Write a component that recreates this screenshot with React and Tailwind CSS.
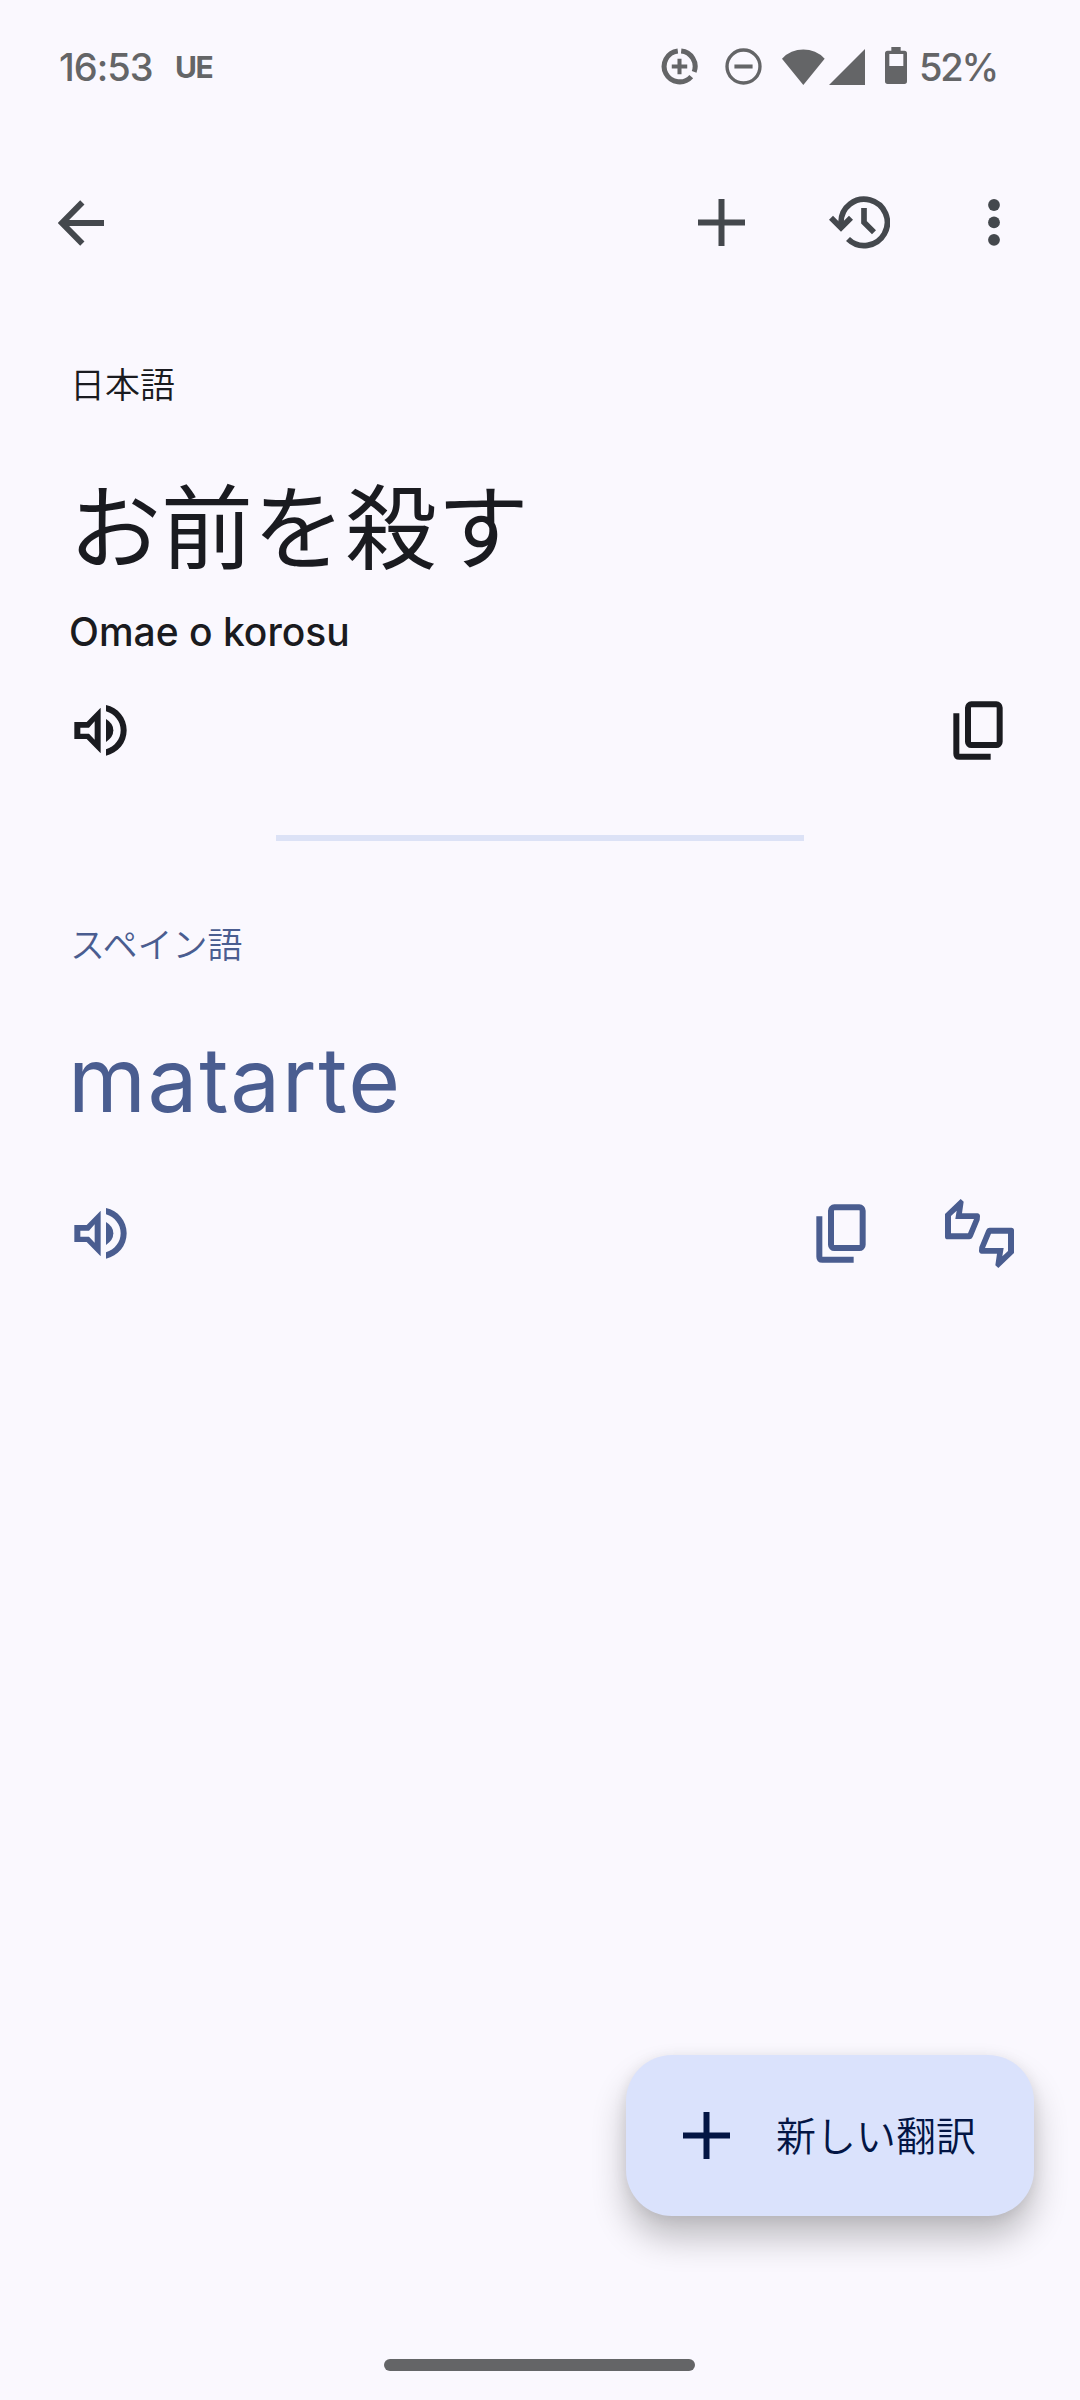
import React from 'react';

const VolumeIcon = () => (
  <svg width="53" height="51" viewBox="0 0 159 153" fill="currentColor">
    <path fillRule="evenodd" d="M1 51H38L80 8V145L38 102H1ZM19 68H45L62 49V104L45 86H19Z" />
    <path d="M96 42Q118 55 118 76T96 111Z" />
    <path d="M96 0C132 8 158 38 158 76S132 144 96 152V133C122 125 140 103 140 76S122 27 96 19Z" />
  </svg>
);

const CopyIcon = () => (
  <svg width="50" height="59" viewBox="0 0 150 177" fill="none" stroke="currentColor" strokeWidth="18">
    <rect x="45" y="10" width="95" height="122" rx="10" />
    <path d="M10 37V158Q10 167 19 167H113" />
  </svg>
);

const ThumbsIcon = () => {
  const thumb = "M0 45L47 0L56 8L51 43H97Q105 44 105 52L104 63L83 114Q80 121 73 121H8Q0 121 0 113ZM18 51L35 35L31 60H87L69 103H18Z";
  return (
    <svg width="69" height="69" viewBox="0 0 207 207" fill="currentColor" fillRule="evenodd">
      <path d={thumb} />
      <path d={thumb} transform="rotate(180 103.5 103.5)" />
    </svg>
  );
};

const PlusIcon = () => (
  <svg width="47" height="47" viewBox="0 0 47 47" stroke="currentColor" strokeWidth="6">
    <path d="M0 23.5H47M23.5 0V47" />
  </svg>
);

const BackIcon = () => (
  <svg width="46" height="46" viewBox="0 0 138 138" fill="none" stroke="currentColor" strokeWidth="18">
    <path d="M138 69H14M73 7L12 69L73 131" />
  </svg>
);

const HistoryIcon = () => (
  <svg width="61" height="53" viewBox="0 0 183 159" fill="none" stroke="currentColor" strokeWidth="17">
    <path d="M36 90V79A69.5 69.5 0 1 1 57 129" />
    <path d="M6 65L36 95L66 65" />
    <path d="M105 36V79L135 109" />
  </svg>
);

const MoreIcon = () => (
  <svg width="12" height="47" viewBox="0 0 12 47" fill="currentColor">
    <circle cx="6" cy="6" r="5.9" />
    <circle cx="6" cy="23.4" r="5.9" />
    <circle cx="6" cy="40.8" r="5.9" />
  </svg>
);

function StatusBar() {
  return (
    <div className="flex h-[133px] items-center pl-[59px] text-[#646567]">
      <span className="w-[116px] text-[38px] leading-none font-medium tracking-[-1px]">16:53</span>
      <span className="w-[486px] text-[30px] leading-none font-bold tracking-[-1.5px]">UE</span>
      {/* data saver */}
      <svg className="mr-[27px]" width="37" height="37" viewBox="0 0 110 110" fill="none" stroke="currentColor">
        <path strokeWidth="15" d="M50 9A46 46 0 1 0 90 85M60 9A46 46 0 0 1 98.5 71" />
        <path strokeWidth="12" d="M32 55H78M55 32V78" />
      </svg>
      {/* do not disturb */}
      <svg className="mr-[20px]" width="37" height="37" viewBox="0 0 110 110" fill="none" stroke="currentColor">
        <circle cx="55" cy="55" r="49" strokeWidth="10" />
        <path strokeWidth="12" d="M28 55H82" />
      </svg>
      <svg className="mr-[4px]" width="43" height="36" viewBox="0 0 129 108" fill="currentColor">
        <path d="M64 108L0 29A88 88 0 0 1 128 29Z" />
      </svg>
      <svg className="mr-[20px]" width="36" height="36" viewBox="0 0 36 36" fill="currentColor">
        <path d="M0 36L36 0V36Z" />
      </svg>
      <svg className="mb-[3px] mr-[12px]" width="22" height="37" viewBox="0 0 66 111" fill="currentColor">
        <path fillRule="evenodd" d="M19 0H47V11H58Q66 11 66 19V103Q66 111 58 111H8Q0 111 0 103V19Q0 11 8 11H19ZM13 21V57H55V21Z" />
      </svg>
      <span className="text-[38px] leading-none font-medium tracking-[-2.2px]">52%</span>
    </div>
  );
}

function TopBar() {
  return (
    <div className="flex h-[179px] items-center pr-[80px] pl-[58px] text-[#44484d]">
      <BackIcon />
      <div className="ml-auto flex items-center">
        <PlusIcon />
        <div className="mr-[98px] ml-[84px]"><HistoryIcon /></div>
        <MoreIcon />
      </div>
    </div>
  );
}

export default function App() {
  return (
    <div className="flex h-[2400px] w-[1080px] flex-col bg-[#faf8fe] font-['Inter','Noto_Sans_CJK_JP',sans-serif]">
      <StatusBar />
      <TopBar />

      <section className="px-[70px] pt-[45px] text-[#1a1b20]">
        <p className="h-[52px] font-['Noto_Sans_CJK_JP',sans-serif] text-[35px] leading-[52px] font-[350]">日本語</p>
        <h1 className="mt-[45px] -ml-px h-[136px] font-['Noto_Sans_CJK_JP',sans-serif] text-[92px] leading-[136px]">お前を殺す</h1>
        <p className="mt-[17px] -ml-px h-[50px] text-[39px] leading-[50px] font-medium">Omae o korosu</p>
        <div className="mt-[44px] flex items-center justify-between pr-[7px] pl-[4px]">
          <VolumeIcon />
          <CopyIcon />
        </div>
      </section>

      <div className="mx-auto mt-[75px] h-[6px] w-[528px] shrink-0 bg-[#dce2f6]" />

      <section className="px-[70px] pt-[76px] text-[#4a5d90]">
        <p className="h-[52px] font-['Noto_Sans_CJK_JP',sans-serif] text-[35px] leading-[52px] font-[350]">スペイン語</p>
        <p className="mt-[51px] -ml-[2px] h-[120px] text-[89px] leading-[120px] tracking-[1.6px]">matarte</p>
        <div className="mt-[59px] flex items-center pl-[4px]">
          <VolumeIcon />
          <div className="mr-[79px] ml-auto"><CopyIcon /></div>
          <div className="-mr-[4px]"><ThumbsIcon /></div>
        </div>
      </section>

      <button className="mt-auto mr-[46px] flex h-[161px] w-[408px] shrink-0 items-center self-end rounded-[46px] bg-[#dae2fc] pl-[57px] text-[#031544] shadow-[0_22px_34px_rgba(0,0,0,0.24),0_2px_14px_rgba(0,0,0,0.08)]">
        <PlusIcon />
        <span className="mb-[4px] ml-[46px] font-['Noto_Sans_CJK_JP',sans-serif] text-[40px] leading-[60px] font-[350]">新しい翻訳</span>
      </button>

      <div className="mt-[143px] mb-[29px] ml-[384px] h-[12px] w-[311px] shrink-0 rounded-full bg-[#646567]" />
    </div>
  );
}
